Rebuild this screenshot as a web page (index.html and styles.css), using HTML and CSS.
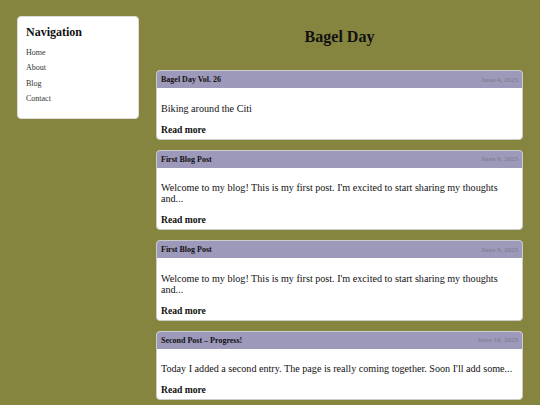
FILE: index.html
```html
<!DOCTYPE html>
<html lang="en">
<head>
    <meta charset="UTF-8">
    <meta name="viewport" content="width=device-width, initial-scale=1.0">
    <title>Bagel Day</title>
    <link rel="stylesheet" href="styles.css">
</head>
<body>
    <aside class="sidebar">
        <h2 class="sidebar-title">Navigation</h2>
        <ul class="nav-list">
            <li><a href="#" class="nav-link">Home</a></li>
            <li><a href="#" class="nav-link">About</a></li>
            <li><a href="#" class="nav-link">Blog</a></li>
            <li><a href="#" class="nav-link">Contact</a></li>
        </ul>
    </aside>
    <main class="main-content">
        <h1 class="page-title">Bagel Day</h1>

        <article class="post">
            <div class="post-header">
                <span class="post-title">Bagel Day Vol. 26</span>
                <span class="post-date">June 4, 2025</span>
            </div>
            <div class="post-body">
                <p class="post-excerpt">Biking around the Citi</p>
                <a href="#" class="read-more">Read more</a>
            </div>
        </article>

        <article class="post">
            <div class="post-header">
                <span class="post-title">First Blog Post</span>
                <span class="post-date">June 9, 2025</span>
            </div>
            <div class="post-body">
                <p class="post-excerpt">Welcome to my blog! This is my first post. I'm excited to start sharing my thoughts and...</p>
                <a href="#" class="read-more">Read more</a>
            </div>
        </article>

        <article class="post">
            <div class="post-header">
                <span class="post-title">First Blog Post</span>
                <span class="post-date">June 9, 2025</span>
            </div>
            <div class="post-body">
                <p class="post-excerpt">Welcome to my blog! This is my first post. I'm excited to start sharing my thoughts and...</p>
                <a href="#" class="read-more">Read more</a>
            </div>
        </article>

        <article class="post">
            <div class="post-header">
                <span class="post-title">Second Post &ndash; Progress!</span>
                <span class="post-date">June 10, 2025</span>
            </div>
            <div class="post-body">
                <p class="post-excerpt">Today I added a second entry. The page is really coming together. Soon I'll add some...</p>
                <a href="#" class="read-more">Read more</a>
            </div>
        </article>
    </main>
</body>
</html>
```

FILE: styles.css
```css
* {
    margin: 0;
    padding: 0;
    box-sizing: border-box;
}

body {
    display: flex;
    align-items: flex-start;
    gap: 17px;
    padding: 16px 17px;
    background-color: #868540;
    font-family: "Liberation Serif", "Times New Roman", serif;
    color: #111;
}

.sidebar {
    width: 122px;
    flex-shrink: 0;
    background-color: #fff;
    border: 1px solid #ddd;
    border-radius: 4px;
    padding: 8px 8px 11px;
}

.sidebar-title {
    font-size: 12px;
    line-height: 14px;
    font-weight: bold;
    margin-bottom: 6px;
}

.nav-list {
    list-style: none;
}

.nav-list li {
    font-size: 8px;
    line-height: 15.4px;
}

.nav-link {
    color: #333;
    text-decoration: none;
}

.main-content {
    flex: 1;
}

.page-title {
    font-size: 16px;
    line-height: 18px;
    text-align: center;
    margin: 12px 0 24px;
}

.post {
    background-color: #fff;
    border: 1px solid #ccc;
    border-radius: 4px;
    overflow: hidden;
    margin-bottom: 10px;
}

.post-header {
    display: flex;
    justify-content: space-between;
    align-items: center;
    height: 17px;
    padding: 0 4px;
    background-color: #9d99ba;
}

.post-title {
    font-size: 8px;
    font-weight: bold;
}

.post-date {
    font-size: 7px;
    font-weight: bold;
    color: #858296;
}

.post-body {
    padding: 4.5px 4px 3.5px;
}

.post-excerpt {
    font-size: 10.15px;
    line-height: 11px;
    margin: 10px 0;
}

.read-more {
    display: block;
    font-size: 9.6px;
    line-height: 11.5px;
    font-weight: bold;
    color: #111;
    text-decoration: none;
}
```
